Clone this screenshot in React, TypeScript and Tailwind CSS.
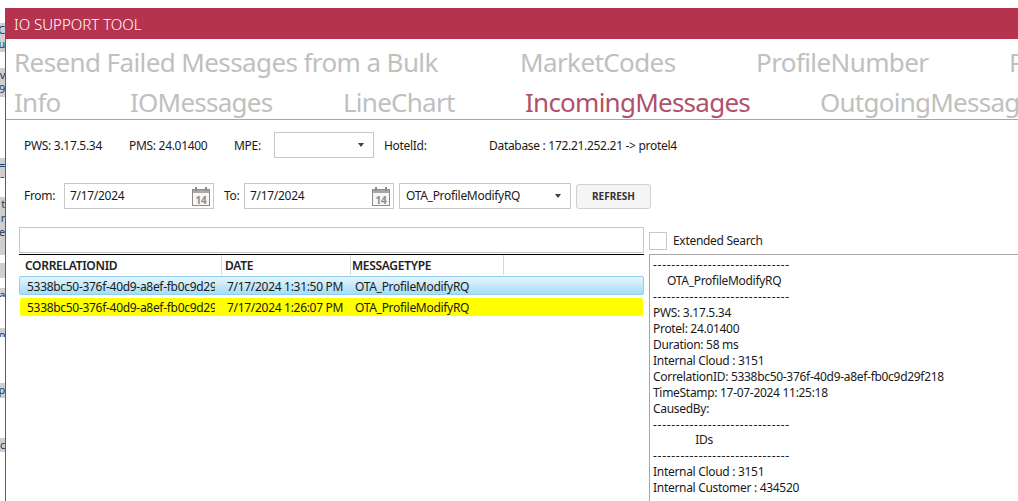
import React from 'react';

const fragments = [
  { h: 29, top: 23, lines: ['C', 'u'] },
  { h: 29, top: 16, lines: ['v', '9'] },
  { h: 20, top: 61, lines: ['=', 'e'] },
  { h: 58, top: 19, lines: ['t', 'r', 'e'] },
  { h: 15, top: 8, lines: [] },
  { h: 9, top: 10, lines: ['a'] },
  { h: 9, top: 31, lines: ['o'] },
  { h: 15, top: 46, lines: ['p', 't'] },
  { h: 14, top: 40, lines: ['c'] },
];

const tabsTop = [
  { label: 'Resend Failed Messages from a Bulk', w: 506 },
  { label: 'MarketCodes', w: 236 },
  { label: 'ProfileNumber', w: 253 },
  { label: 'PMS', w: 60 },
];

const tabsBottom = [
  { label: 'Info', w: 116 },
  { label: 'IOMessages', w: 213 },
  { label: 'LineChart', w: 182 },
  { label: 'IncomingMessages', w: 295, active: true },
  { label: 'OutgoingMessages', w: 260 },
];

const dashes = '------------------------------';

const details = [
  dashes,
  '     OTA_ProfileModifyRQ',
  dashes,
  'PWS: 3.17.5.34',
  'Protel: 24.01400',
  'Duration: 58 ms',
  'Internal Cloud : 3151',
  'CorrelationID: 5338bc50-376f-40d9-a8ef-fb0c9d29f218',
  'TimeStamp: 17-07-2024 11:25:18',
  'CausedBy:',
  dashes,
  '               IDs',
  dashes,
  'Internal Cloud : 3151',
  'Internal Customer : 434520',
];

const rows = [
  { time: '7/17/2024 1:31:50 PM', cls: 'h-[19px] mt-px pt-[3px] border border-[#8fd0f0] bg-gradient-to-b from-[#e6f5fd] to-[#a6dcf6]' },
  { time: '7/17/2024 1:26:07 PM', cls: 'h-[18px] mt-[3px] mx-px pt-px bg-[#ffff00]' },
];

function CalendarIcon() {
  return (
    <svg width="18" height="19" viewBox="0 0 18 19" className="shrink-0">
      <rect x="0.5" y="2.5" width="17" height="16" fill="#f6f6f6" stroke="#8c8c8c" />
      <rect x="1" y="3" width="16" height="3" fill="#a8a8a8" />
      <rect x="3" y="0" width="2" height="4" fill="#8c8c8c" />
      <rect x="13" y="0" width="2" height="4" fill="#8c8c8c" />
      <text x="9" y="16.5" textAnchor="middle" fontSize="10" fontWeight="700" fill="#8c8c8c" fontFamily="Noto Sans, sans-serif">14</text>
    </svg>
  );
}

function Arrow() {
  return <span className="w-0 h-0 border-x-[3px] border-x-transparent border-t-[4px] border-t-[#404040]" />;
}

function DateField() {
  return (
    <div className="w-[150px] h-[26px] border border-[#c8c8c8] flex items-center justify-between pl-[5px] pr-[3px]">
      <span>7/17/2024</span>
      <CalendarIcon />
    </div>
  );
}

export default function App() {
  return (
    <div className="w-[1018px] h-[501px] overflow-hidden bg-white flex text-[12px] leading-4 text-[#1a1a1a] font-['Noto_Sans',sans-serif] tracking-[-0.3px]">
      {/* Whatever is behind the window on the left */}
      <div className="w-[5px] shrink-0 flex flex-col">
        {fragments.map((f, i) => (
          <div
            key={i}
            className="bg-[#cfcfcf] overflow-hidden flex flex-col items-end text-[#1f3a5f] text-[11px] leading-[14px]"
            style={{ height: f.h, marginTop: f.top }}
          >
            {f.lines.map((l, j) => (
              <span key={j}>{l}</span>
            ))}
          </div>
        ))}
      </div>

      <div className="w-[1013px] shrink-0 mt-2 flex flex-col border-l border-[#b5334f]">
        <div className="h-[31px] shrink-0 bg-[#b5334f] pl-2 flex items-center text-white text-[15px] font-light tracking-normal">
          IO SUPPORT TOOL
        </div>

        <div className="h-[80px] shrink-0 pl-2 pt-[3px] overflow-hidden text-[26px] leading-[40px] text-[#c0c0c0]">
          <div className="flex whitespace-nowrap tracking-[-0.6px]">
            {tabsTop.map((t) => (
              <span key={t.label} className="shrink-0" style={{ width: t.w }}>
                {t.label}
              </span>
            ))}
          </div>
          <div className="flex whitespace-nowrap tracking-[-0.75px]">
            {tabsBottom.map((t) => (
              <span key={t.label} className={t.active ? 'shrink-0 text-[#b0516b]' : 'shrink-0'} style={{ width: t.w }}>
                {t.label}
              </span>
            ))}
          </div>
        </div>

        <div className="flex-1 min-h-0 border-t border-[#a6a6a6] pl-[18px] pt-3 flex flex-col">
          <div className="h-[26px] flex items-center whitespace-nowrap">
            <span className="w-[105px] pt-px">PWS: 3.17.5.34</span>
            <span className="w-[105px] pt-px">PMS: 24.01400</span>
            <span className="w-[40px] pt-px">MPE:</span>
            <div className="w-[100px] h-[26px] border border-[#c8c8c8] flex items-center justify-end pr-[9px]">
              <Arrow />
            </div>
            <span className="ml-[10px] w-[105px] pt-px">HotelId:</span>
            <span className="pt-px">Database : 172.21.252.21 -&gt; protel4</span>
          </div>

          <div className="mt-[25px] h-[26px] flex items-center whitespace-nowrap">
            <span className="w-[40px]">From:</span>
            <DateField />
            <span className="ml-[10px] w-[20px]">To:</span>
            <DateField />
            <div className="ml-[5px] w-[172px] h-[26px] border border-[#c8c8c8] flex items-center justify-between pl-[6px] pr-[9px]">
              <span>OTA_ProfileModifyRQ</span>
              <Arrow />
            </div>
            <button className="ml-[5px] w-[75px] h-[25px] border border-[#d0d0d0] rounded-[3px] bg-[#f5f5f5] text-[10px] font-bold tracking-normal text-[#333]">
              REFRESH
            </button>
          </div>

          <div className="mt-[18px] flex flex-1 min-h-0 -ml-[5px]">
            <div className="w-[625px] shrink-0 flex flex-col">
              <div className="h-[26px] border border-[#c8c8c8]" />
              <div className="mt-px border-t border-black h-[21px] flex items-stretch font-semibold text-[#222]">
                <span className="w-[203px] border-r border-[#d8d8d8] pl-[6px] pt-px flex items-center">CORRELATIONID</span>
                <span className="w-[129px] border-r border-[#d8d8d8] pl-[3px] pt-px flex items-center">DATE</span>
                <span className="w-[153px] border-r border-[#d8d8d8] pl-[1px] pt-px flex items-center">MESSAGETYPE</span>
              </div>
              {rows.map((r) => (
                <div key={r.time} className={`${r.cls} rounded-[2px] flex items-center whitespace-nowrap`}>
                  <span className="w-[188px] shrink-0 ml-[7px] overflow-hidden">5338bc50-376f-40d9-a8ef-fb0c9d29f218</span>
                  <span className="w-[128px] shrink-0 ml-[12px]">{r.time}</span>
                  <span>OTA_ProfileModifyRQ</span>
                </div>
              ))}
            </div>

            <div className="ml-[5px] flex-1 min-w-0 flex flex-col">
              <div className="h-[27px] flex items-center">
                <span className="w-[18px] h-[18px] border border-[#c8c8c8]" />
                <span className="ml-[6px]">Extended Search</span>
              </div>
              <div className="flex-1 border-l border-t border-[#a6a6a6] pl-[3px] pt-[2px] whitespace-pre leading-[15.95px]">
                {details.map((line, i) => (
                  <div key={i} className={line === dashes ? 'tracking-[0.7px]' : ''}>
                    {line}
                  </div>
                ))}
              </div>
            </div>
          </div>
        </div>
      </div>
    </div>
  );
}
